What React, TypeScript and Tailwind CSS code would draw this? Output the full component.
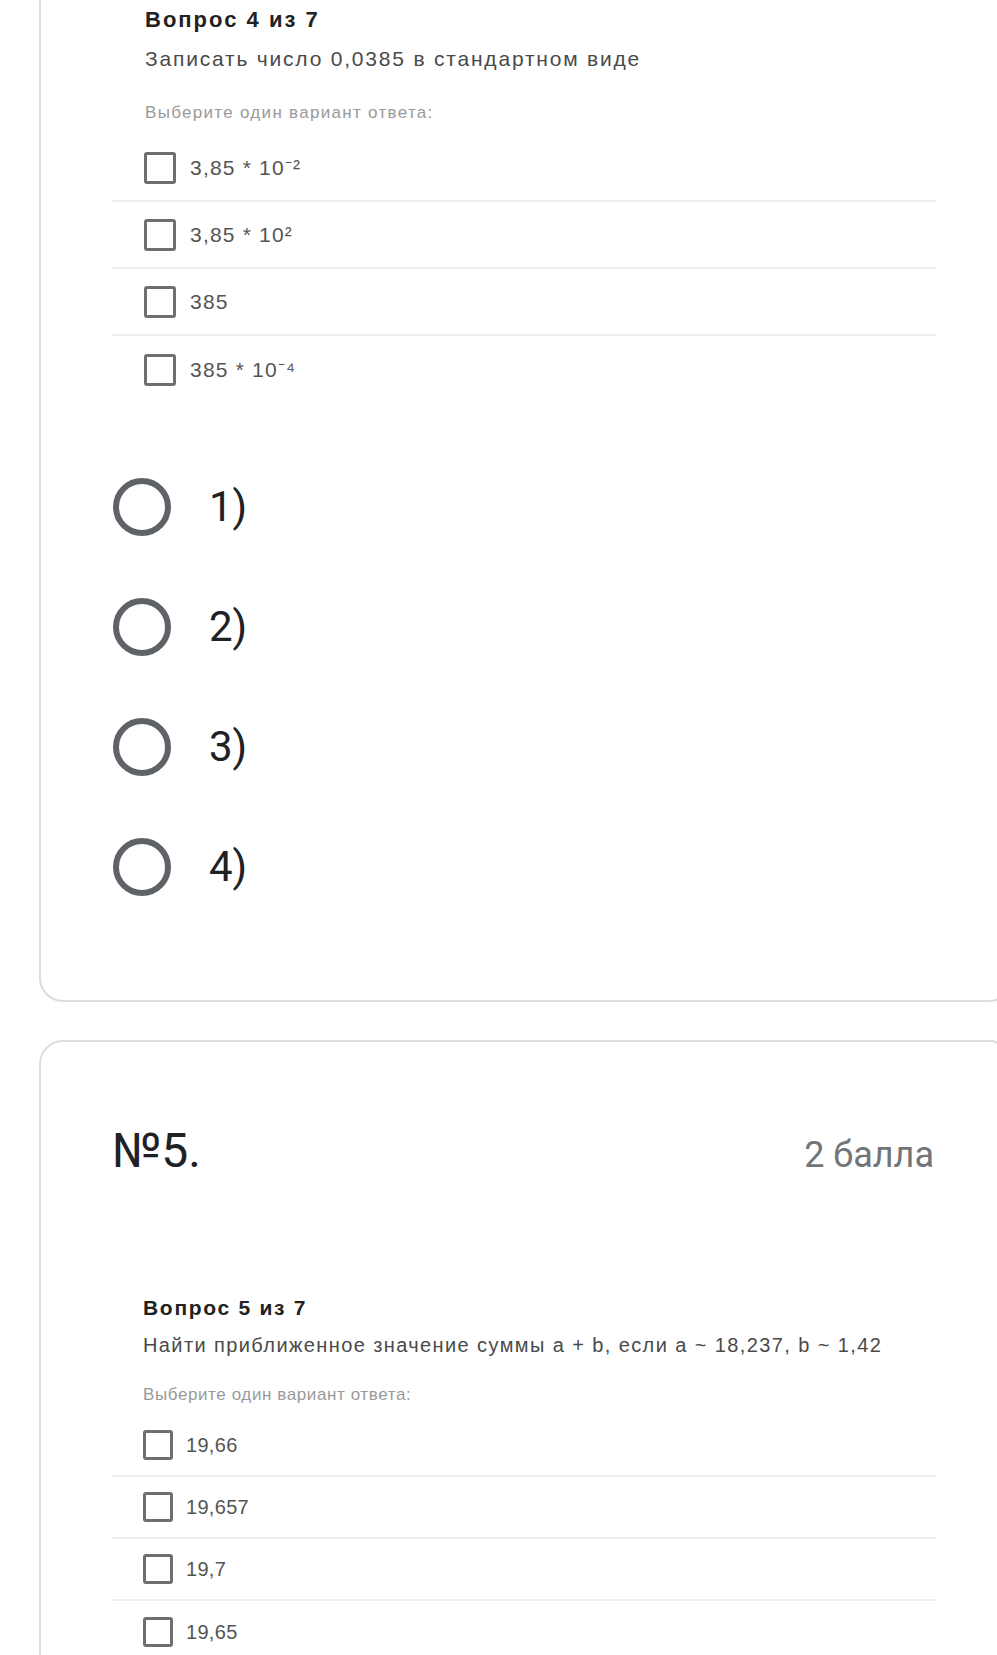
import React from "react";

const ARIAL = "font-['Liberation_Sans',Arial,sans-serif]";
const ROBOTO = "font-['Roboto','Noto_Sans',sans-serif]";

function Checkbox({ size }: { size: "lg" | "sm" }) {
  return (
    <div
      className={
        size === "lg"
          ? "w-[32px] h-[32px] shrink-0 rounded-[3px] border-[3px] border-[#6f6f6f] bg-white"
          : "w-[30px] h-[30px] shrink-0 rounded-[3px] border-[3px] border-[#6f6f6f] bg-white"
      }
    />
  );
}

function Radio({ label }: { label: string }) {
  return (
    <div className="flex items-center h-[58px] pl-[1px]">
      <div className="w-[58px] h-[58px] rounded-full border-[6px] border-[#5f6368] shrink-0" />
      <span className={`${ROBOTO} ml-[38px] text-[42px] leading-[56px] text-[#202124]`}>{label}</span>
    </div>
  );
}

export default function App() {
  const opts1 = [
    <>3,85 * 10⁻²</>,
    <>3,85 * 10²</>,
    <>385</>,
    <>385 * 10⁻⁴</>,
  ];
  const opts2 = ["19,66", "19,657", "19,7", "19,65"];

  return (
    <div className="w-[997px] h-[1655px] overflow-hidden bg-white">
      {/* Card 1 (continues above the viewport) */}
      <div className="ml-[39px] w-[974px] border-2 border-t-0 border-[#dadce0] rounded-b-[24px] pl-[71px] pt-[6px] pb-[104px]">
        <div className={`w-[824px] ${ARIAL}`}>
          <div className="pl-[33px] text-[22px] leading-[28px] font-bold tracking-[2px] text-[#222222]">
            Вопрос 4 из 7
          </div>
          <div className="pl-[33px] mt-[11px] text-[21px] leading-[28px] tracking-[1.8px] text-[#4a4a4a]">
            Записать число 0,0385 в стандартном виде
          </div>
          <div className="pl-[33px] mt-[28px] text-[17px] leading-[24px] tracking-[1.3px] text-[#9a9a9a]">
            Выберите один вариант ответа:
          </div>
          <div className="mt-[10px]">
            {opts1.map((o, i) => (
              <div
                key={i}
                className={`h-[67px] flex items-center pl-[32px] ${i < 3 ? "border-b-2 border-[#eeeeee]" : ""}`}
              >
                <Checkbox size="lg" />
                <span className="ml-[14px] text-[21px] leading-[28px] tracking-[1.2px] text-[#555555]">{o}</span>
              </div>
            ))}
          </div>
        </div>

        <div className="mt-[75px] flex flex-col gap-[62px]">
          <Radio label="1)" />
          <Radio label="2)" />
          <Radio label="3)" />
          <Radio label="4)" />
        </div>
      </div>

      {/* Card 2 */}
      <div className="mt-[38px] ml-[39px] w-[974px] h-[700px] border-2 border-[#dadce0] rounded-[24px] pl-[71px] pt-[81px]">
        <div className={`w-[824px] flex items-baseline justify-between pr-[2px] ${ROBOTO}`}>
          <span className="text-[48px] leading-[56px] text-[#202124]">№5.</span>
          <span className="text-[36px] leading-[56px] text-[#70757a]">2 балла</span>
        </div>

        <div className={`w-[824px] mt-[111px] ${ARIAL}`}>
          <div className="pl-[31px] text-[21px] leading-[28px] font-bold tracking-[1.7px] text-[#222222]">
            Вопрос 5 из 7
          </div>
          <div className="pl-[31px] mt-[9px] text-[20px] leading-[28px] tracking-[1.4px] text-[#4a4a4a]">
            Найти приближенное значение суммы a + b, если a ~ 18,237, b ~ 1,42
          </div>
          <div className="pl-[31px] mt-[24px] text-[17px] leading-[24px] tracking-[0.6px] text-[#9a9a9a]">
            Выберите один вариант ответа:
          </div>
          <div className="mt-[8px]">
            {opts2.map((o, i) => (
              <div
                key={i}
                className={`h-[62px] flex items-center pl-[31px] ${i < 3 ? "border-b-2 border-[#eeeeee]" : ""}`}
              >
                <Checkbox size="sm" />
                <span className="ml-[13px] text-[20px] leading-[28px] tracking-[0.3px] text-[#555555]">{o}</span>
              </div>
            ))}
          </div>
        </div>
      </div>
    </div>
  );
}
